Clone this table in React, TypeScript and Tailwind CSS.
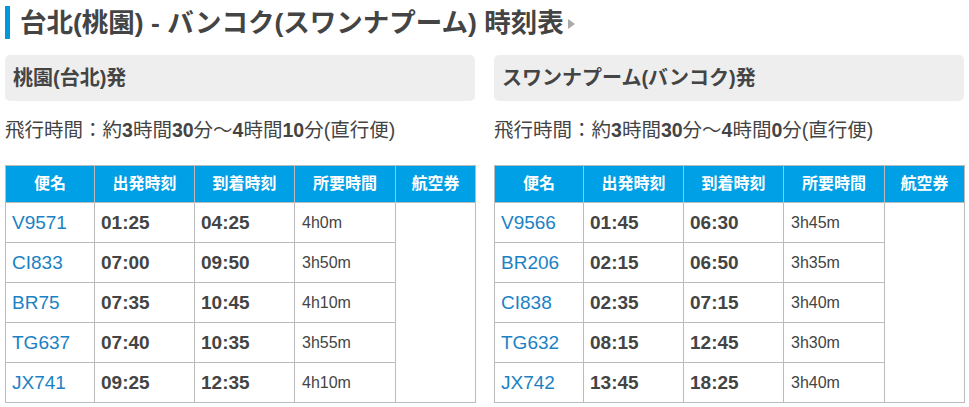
import React from "react";

type Row = { no: string; dep: string; arr: string; dur: string };

const left: Row[] = [
  { no: "V9571", dep: "01:25", arr: "04:25", dur: "4h0m" },
  { no: "CI833", dep: "07:00", arr: "09:50", dur: "3h50m" },
  { no: "BR75", dep: "07:35", arr: "10:45", dur: "4h10m" },
  { no: "TG637", dep: "07:40", arr: "10:35", dur: "3h55m" },
  { no: "JX741", dep: "09:25", arr: "12:35", dur: "4h10m" },
];

const right: Row[] = [
  { no: "V9566", dep: "01:45", arr: "06:30", dur: "3h45m" },
  { no: "BR206", dep: "02:15", arr: "06:50", dur: "3h35m" },
  { no: "CI838", dep: "02:35", arr: "07:15", dur: "3h40m" },
  { no: "TG632", dep: "08:15", arr: "12:45", dur: "3h30m" },
  { no: "JX742", dep: "13:45", arr: "18:25", dur: "3h40m" },
];

function Column({
  title,
  time,
  rows,
}: {
  title: string;
  time: React.ReactNode;
  rows: Row[];
}) {
  return (
    <div className="flex flex-col">
      <div className="h-[46px] rounded-[5px] bg-[#eeeeee] pl-[8px] flex items-center text-[20px] font-bold text-[#444444] leading-[24px]">
        {title}
      </div>
      <p className="mt-[17px] mb-[23px] text-[19.5px] leading-[24px] text-[#444444]">{time}</p>
      <table className="table-fixed border-collapse w-[470px]">
        <colgroup>
          <col className="w-[89px]" />
          <col className="w-[100px]" />
          <col className="w-[100px]" />
          <col className="w-[101px]" />
          <col className="w-[80px]" />
        </colgroup>
        <thead>
          <tr className="h-[37px] bg-[#00a0e6] text-white text-[16px] font-bold">
            {["便名", "出発時刻", "到着時刻", "所要時間", "航空券"].map((h) => (
              <th key={h} className="border border-[#bbbbbb] text-center font-bold leading-[20px]">
                {h}
              </th>
            ))}
          </tr>
        </thead>
        <tbody>
          {rows.map((r, i) => (
            <tr key={r.no} className="h-[40px]">
              <td className="border border-[#bbbbbb] px-[6px] text-[19px] text-[#1a82c4] leading-[22px]">{r.no}</td>
              <td className="border border-[#bbbbbb] px-[6px] text-[19px] font-bold text-[#444444] leading-[22px]">{r.dep}</td>
              <td className="border border-[#bbbbbb] px-[6px] text-[19px] font-bold text-[#444444] leading-[22px]">{r.arr}</td>
              <td className="border border-[#bbbbbb] px-[7px] text-[16px] text-[#444444] leading-[20px]">{r.dur}</td>
              {i === 0 && <td rowSpan={5} className="border border-[#bbbbbb]"></td>}
            </tr>
          ))}
        </tbody>
      </table>
    </div>
  );
}

export default function App() {
  return (
    <div
      className="bg-white px-[5px] pt-[6px] w-[969px] h-[407px] overflow-hidden"
      style={{ fontFamily: '"Liberation Sans", "Noto Sans CJK JP", sans-serif' }}
    >
      <h1 className="flex items-center h-[33px] border-l-[5px] border-[#0098dc] pl-[10px] text-[26.5px] font-bold text-[#444444] leading-[30px]">
        <span>台北(桃園) - バンコク(スワンナプーム) 時刻表</span>
        <span className="ml-[4px] mt-[2px] w-0 h-0 border-y-[5px] border-y-transparent border-l-[7px] border-l-[#aaaaaa]"></span>
      </h1>
      <div className="mt-[16px] flex gap-[19px]">
        <div className="w-[470px]">
          <Column
            title="桃園(台北)発"
            rows={left}
            time={
              <>
                飛行時間：約<b>3</b>時間<b>30</b>分～<b>4</b>時間<b>10</b>分(直行便)
              </>
            }
          />
        </div>
        <div className="w-[470px]">
          <Column
            title="スワンナプーム(バンコク)発"
            rows={right}
            time={
              <>
                飛行時間：約<b>3</b>時間<b>30</b>分～<b>4</b>時間<b>0</b>分(直行便)
              </>
            }
          />
        </div>
      </div>
    </div>
  );
}
